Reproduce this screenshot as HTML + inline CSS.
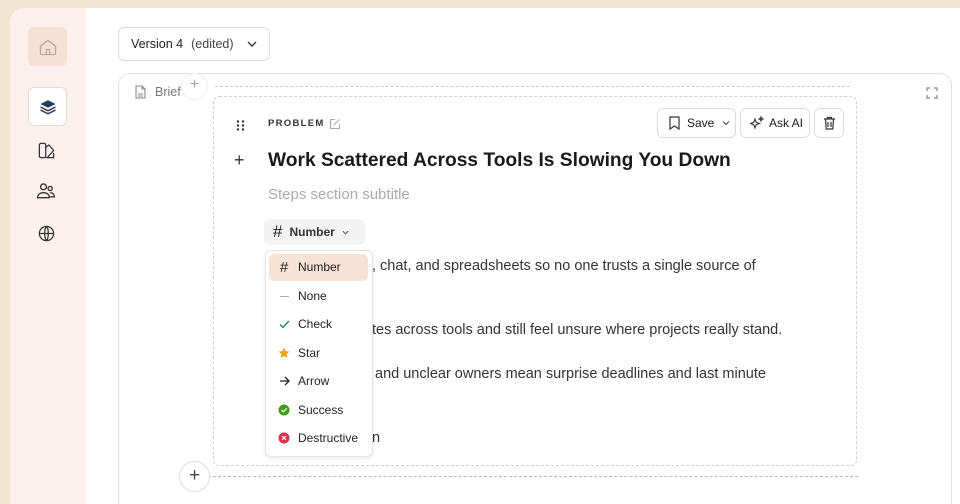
<!DOCTYPE html><html><head><style>
*{margin:0;padding:0;box-sizing:border-box}
html,body{width:960px;height:504px;overflow:hidden}
body{background:#f2e5d3;font-family:"Liberation Sans",sans-serif;position:relative;color:#1a1a1a}
.a{position:absolute}
.side{left:10px;top:8px;width:78px;bottom:0;background:#fcf1ec;border-radius:14px 0 0 0}
.main{left:86px;top:8px;right:0;bottom:0;background:#fff}
.ib{width:39px;height:39px;border-radius:6px;display:flex;align-items:center;justify-content:center}
.txt{font-size:14.5px;color:#333;white-space:nowrap}
.mi{left:270px;width:98px;height:26px;font-size:12px;display:flex;align-items:center;color:#222}
.mi .ic{width:28px;display:flex;justify-content:center;align-items:center}
</style></head><body>
<div class="a side"></div>
<div class="a main"></div>
<div class="a ib" style="left:28px;top:27px;background:#f5e2d7"><svg width="20" height="20" viewBox="0 0 24 24" fill="none" stroke="#c9a594" stroke-width="1.6"><path d="M3 11l9-7 9 7v9a1 1 0 0 1-1 1H4a1 1 0 0 1-1-1z"/><path d="M10 21v-6h4v6"/></svg></div>
<div class="a ib" style="left:28px;top:87px;background:#fff;border:1px solid #e3dcd8"><svg width="18" height="18" viewBox="0 0 24 24"><path d="M12 3l10 5-10 5-10-5z" fill="#243b5a"/><path d="M2 12l10 5 10-5M2 16l10 5 10-5" fill="none" stroke="#243b5a" stroke-width="2"/></svg></div>
<div class="a" style="left:37px;top:141px"><svg width="19" height="19" viewBox="0 0 24 24" fill="none" stroke="#333" stroke-width="1.6"><rect x="3" y="3" width="8" height="18" rx="2"/><path d="M11 8l4-3 6 7-8 9M11 21h10v-6"/></svg></div>
<div class="a" style="left:36px;top:181px"><svg width="20" height="20" viewBox="0 0 24 24" fill="none" stroke="#333" stroke-width="1.6"><circle cx="9" cy="7" r="3.5"/><path d="M2 20c0-4 3-6 7-6s7 2 7 6z"/><circle cx="17" cy="9" r="2.5"/><path d="M17 14c3 0 5 2 5 5h-5"/></svg></div>
<div class="a" style="left:37px;top:224px"><svg width="19" height="19" viewBox="0 0 24 24" fill="none" stroke="#333" stroke-width="1.6"><circle cx="12" cy="12" r="9"/><path d="M3 12h18M12 3c-3 3-3 15 0 18M12 3c3 3 3 15 0 18"/></svg></div>

<div class="a" style="left:118px;top:27px;width:152px;height:34px;border:1px solid #ddd;border-radius:6px;font-size:12.5px;display:flex;align-items:center;padding-left:12px"><span style="color:#222">Version 4</span><span style="margin-left:8px;color:#444">(edited)</span><svg style="margin-left:12px" width="12" height="12" viewBox="0 0 12 12" fill="none" stroke="#333" stroke-width="1.4"><path d="M2 4l4 4 4-4"/></svg></div>

<div class="a" style="left:118px;top:73px;width:834px;height:450px;border:1px solid #e2e2e2;border-radius:12px"></div>
<div class="a" style="left:134px;top:85px;font-size:12.5px;color:#777;display:flex;align-items:center"><svg width="13" height="14" viewBox="0 0 13 14" fill="none" stroke="#888" stroke-width="1.1"><path d="M2 1h6l3 3v9H2z M8 1v3h3 M4 9h5M4 11h5"/></svg><span style="margin-left:8px">Brief</span></div>
<div class="a" style="left:926px;top:86px"><svg width="12" height="12" viewBox="0 0 12 12" fill="none" stroke="#888" stroke-width="1.2"><path d="M1 4V1h3M8 1h3v3M11 8v3H8M4 11H1V8"/></svg></div>
<div class="a" style="left:215px;top:86px;width:635px;border-top:1px dashed #ccc"></div>
<div class="a" style="left:181px;top:73px;width:27px;height:27px;border-radius:50%;background:#fff;border:1px solid #eee;color:#aaa;font-size:16px;text-align:center;line-height:22px">+</div>
<div class="a" style="left:213px;top:96px;width:644px;height:370px;border:1px dashed #d2d2d2;border-radius:6px"></div>
<div class="a" style="left:208px;top:476px;width:650px;border-top:1px dashed #bbb"></div>
<div class="a" style="left:179px;top:461px;width:31px;height:31px;border-radius:50%;background:#fff;border:1px solid #ddd;color:#444;font-size:19px;text-align:center;line-height:28px">+</div>

<div class="a" style="left:236px;top:118px"><svg width="9" height="11" viewBox="0 0 9 11" fill="#333"><circle cx="2" cy="1.5" r="1.2"/><circle cx="7" cy="1.5" r="1.2"/><circle cx="2" cy="5.5" r="1.2"/><circle cx="7" cy="5.5" r="1.2"/><circle cx="2" cy="9.5" r="1.2"/><circle cx="7" cy="9.5" r="1.2"/></svg></div>
<div class="a" style="left:268px;top:118px;font-size:9.5px;letter-spacing:1.3px;color:#333;font-weight:600">PROBLEM</div>
<div class="a" style="left:329px;top:117px"><svg width="12" height="12" viewBox="0 0 12 12" fill="none" stroke="#aaa" stroke-width="1.1"><path d="M6 1.5H1.5v9h9V6M5 7l5.5-5.5"/></svg></div>
<div class="a" style="left:657px;top:108px;width:79px;height:30px;border:1px solid #ddd;border-radius:6px;font-size:12px;display:flex;align-items:center;padding-left:10px"><svg width="13" height="14" viewBox="0 0 13 14" fill="none" stroke="#333" stroke-width="1.2"><path d="M2 1h9v12l-4.5-3L2 13z"/></svg><span style="margin-left:6px">Save</span><svg style="margin-left:7px" width="10" height="10" viewBox="0 0 10 10" fill="none" stroke="#444" stroke-width="1.1"><path d="M2 3.5l3 3 3-3"/></svg></div>
<div class="a" style="left:740px;top:108px;width:70px;height:30px;border:1px solid #ddd;border-radius:6px;font-size:12px;display:flex;align-items:center;padding-left:9px"><svg width="14" height="14" viewBox="0 0 14 14" fill="none" stroke="#333" stroke-width="1.1"><path d="M5 3l1.2 3.3L9.5 7.5 6.2 8.7 5 12 3.8 8.7.5 7.5 3.8 6.3z M11 1l.6 1.4L13 3l-1.4.6L11 5l-.6-1.4L9 3l1.4-.6z"/></svg><span style="margin-left:5px">Ask AI</span></div>
<div class="a" style="left:814px;top:108px;width:30px;height:30px;border:1px solid #ddd;border-radius:6px;display:flex;align-items:center;justify-content:center"><svg width="13" height="14" viewBox="0 0 13 14" fill="none" stroke="#333" stroke-width="1.2"><path d="M1 3h11M4.5 3V1.5h4V3M2.5 3l.7 10h6.6l.7-10M5 6v5M8 6v5"/></svg></div>

<div class="a" style="left:234px;top:150px;font-size:18px;color:#333">+</div>
<div class="a" style="left:268px;top:150px;font-size:19.2px;font-weight:bold;color:#1a1a1a;white-space:nowrap">Work Scattered Across Tools Is Slowing You Down</div>
<div class="a" style="left:268px;top:186px;font-size:15px;color:#aaa">Steps section subtitle</div>
<div class="a" style="left:264px;top:219px;width:101px;height:26px;background:#f3f3f3;border-radius:5px;font-size:12px;display:flex;align-items:center;padding-left:9px"><span style="font-size:17px;color:#222">#</span><span style="margin-left:7px;font-weight:600;color:#333">Number</span><svg style="margin-left:6px" width="9" height="9" viewBox="0 0 10 10" fill="none" stroke="#555" stroke-width="1.1"><path d="M2 3.5l3 3 3-3"/></svg></div>

<div class="a txt" style="left:372px;top:258px">, chat, and spreadsheets so no one trusts a single source of</div>
<div class="a txt" style="left:372px;top:322px">tes across tools and still feel unsure where projects really stand.</div>
<div class="a txt" style="left:375px;top:366px">and unclear owners mean surprise deadlines and last minute</div>
<div class="a txt" style="left:372px;top:430px">n</div>

<div class="a" style="left:265px;top:250px;width:108px;height:207px;background:#fff;border:1px solid #e4e4e4;border-radius:6px;box-shadow:0 2px 6px rgba(0,0,0,.08)"></div>
<div class="a" style="left:269px;top:254px;width:99px;height:27px;background:#f6e3d6;border-radius:5px"></div>
<div class="a mi" style="top:254px"><span class="ic" style="font-size:15px">#</span>Number</div>
<div class="a mi" style="top:283px"><span class="ic"><span style="width:9px;border-top:1px solid #aaa"></span></span>None</div>
<div class="a mi" style="top:311px"><span class="ic"><svg width="11" height="9" viewBox="0 0 11 9" fill="none" stroke="#1f8a5a" stroke-width="1.3"><path d="M1 4.5l3 3 6-6.5"/></svg></span>Check</div>
<div class="a mi" style="top:340px"><span class="ic"><svg width="12" height="12" viewBox="0 0 12 12"><path d="M6 .5l1.7 3.6 3.8.4-2.9 2.6.9 3.8L6 9 2.5 10.9l.9-3.8L.5 4.5l3.8-.4z" fill="#e8a812"/></svg></span>Star</div>
<div class="a mi" style="top:368px"><span class="ic"><svg width="11" height="10" viewBox="0 0 11 10" fill="none" stroke="#222" stroke-width="1.3"><path d="M1 5h9M6 1l4 4-4 4"/></svg></span>Arrow</div>
<div class="a mi" style="top:397px"><span class="ic"><svg width="12" height="12" viewBox="0 0 12 12"><circle cx="6" cy="6" r="5.5" fill="#3f9a1f"/><path d="M3.5 6l1.8 1.8L8.7 4.3" fill="none" stroke="#fff" stroke-width="1.2"/></svg></span>Success</div>
<div class="a mi" style="top:425px"><span class="ic"><svg width="12" height="12" viewBox="0 0 12 12"><circle cx="6" cy="6" r="5.5" fill="#d93045"/><path d="M4 4l4 4M8 4l-4 4" stroke="#fff" stroke-width="1.2"/></svg></span>Destructive</div>
</body></html>
